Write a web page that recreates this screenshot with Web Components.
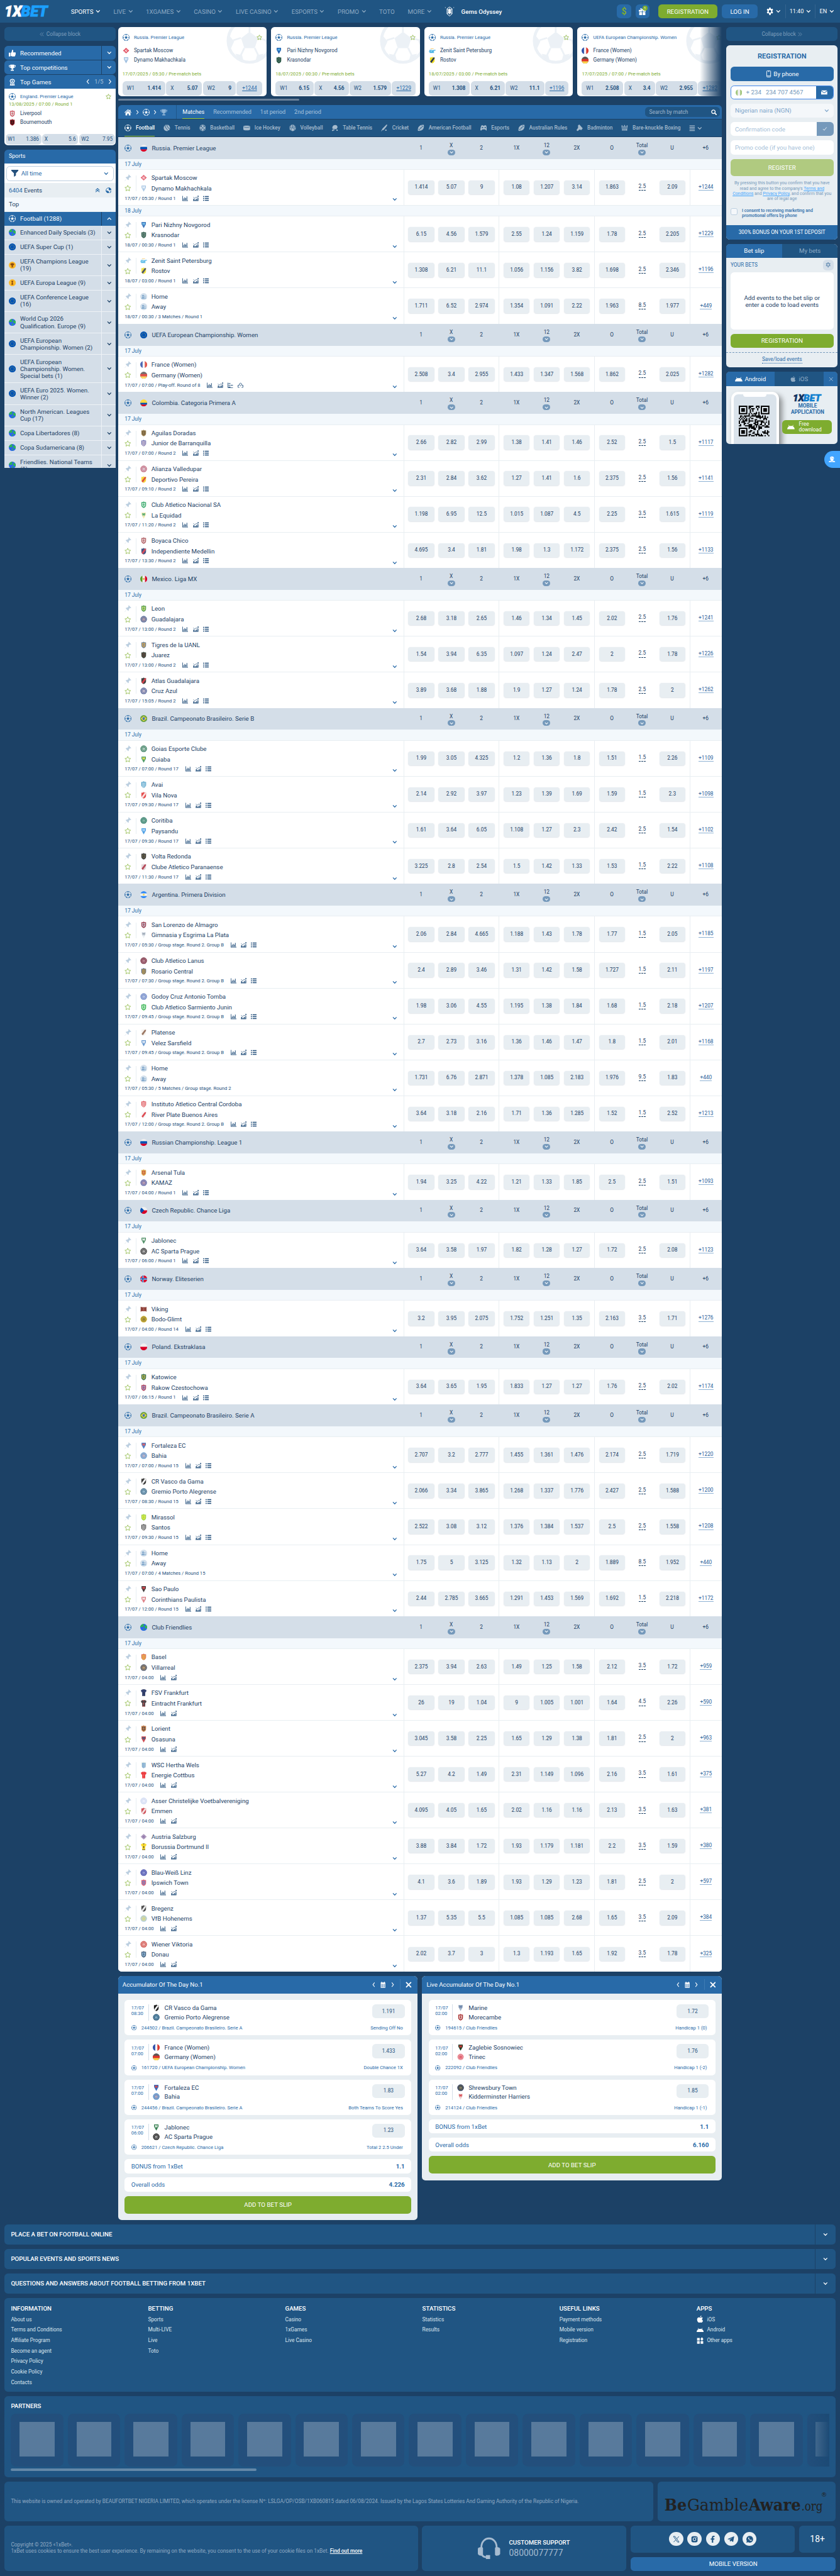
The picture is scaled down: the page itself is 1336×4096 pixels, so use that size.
<!DOCTYPE html>
<html lang="en">
<head>
<meta charset="utf-8">
<title>1xBet - Football</title>
<style>
html{margin:0;background:#1c4166;overflow:hidden}
body{margin:0;zoom:.69583;width:1920px;height:5880px;overflow:hidden;background:#1c4166;font-family:Roboto,"Liberation Sans",sans-serif;font-size:14px;line-height:16px;color:#1c4166}
</style>
</head>
<body>
<bet-page></bet-page>
<script>
const BASE = `*{box-sizing:border-box}svg{display:block;flex:none}.f{display:flex;align-items:center}.c{justify-content:center}.g1{flex:1}`;
const BALL = `<circle cx="8" cy="8" r="7.4" fill="none" stroke="currentColor" stroke-width="1"/><path fill="currentColor" d="M8 4.9l2.900 2.200-1.100 3.400H6.200L5.100 7.100zM5.800 1Q8 .2 10.200 1L8 2.700zM15.300 5.800Q15.800 8.500 14.600 11L13.300 8.200zM.7 5.800Q.2 8.500 1.400 11L2.700 8.200zM10 15.200l.6-2.300 2.300-.4Q12 14.400 10 15.200zM6 15.200l-.6-2.300-2.300-.4Q4 14.400 6 15.200z"/><path stroke="currentColor" stroke-width=".6" fill="none" d="M8 2.500v2.500M11 7l2.600.8M9.800 10.500l1.200 2.500M6.200 10.500L5 13M5 7l-2.600.8"/>`;
const ICONS = {
  ball: BALL,
  home: `<path fill="currentColor" d="M8 1L0 8.300l1.100 1.200L8 3.400l6.900 6.100L16 8.300l-2.300-2.100V2h-2v2.400zM2.300 9.700L8 4.700l5.700 5V15H9.700v-4H6.300v4h-4z"/>`,
  trophy: `<path fill="currentColor" d="M3.500 1h9v1.500H16c0 3.500-1.500 5.600-4.200 5.800C11 9.600 10 10.200 9 10.500v2h2.500V15h-7v-2.500H7v-2C6 10.200 5 9.600 4.200 8.300 1.500 8.100 0 6 0 2.500h3.500zM1.400 3.800c.2 1.600.9 2.700 2.300 3.100L3.400 3.800zm13.200 0h-2l-.3 3.100c1.400-.4 2.100-1.500 2.300-3.100z"/>`,
  thumb: `<path fill="currentColor" d="M0 7h3.500v8.500H0zM4.500 7.500C6.500 6 7 4 7.300 1c0-1 2.900-1.200 2.900 1.600 0 1.400-.4 2.400-.7 3.400h5c1.700 0 1.900 1.900.9 2.600.8.700.7 1.900-.3 2.400.6.800.3 1.900-.6 2.200.3 1-.3 2.300-1.800 2.300H8c-1.600 0-2-1-3.500-1z"/>`,
  medal: `<path fill="none" stroke="currentColor" stroke-width="1.800" d="M8 1.200l1.700.9 1.800.3.700 1.700.9 1.500-.9 1.700-.7 1.700-1.800.3L8 10.400l-1.700-1.100-1.800-.3-.7-1.700-.9-1.700.9-1.500.7-1.700 1.800-.3zM5 9.500L3.500 15l2-.6L7 15.500l1-3 1 3 1.500-1.100 2 .6L11 9.500"/><circle cx="8" cy="5.700" r="1.700" fill="currentColor"/>`,
  funnel: `<path fill="currentColor" d="M0 0h16v2l-5.500 6v5L6 16V8L0 2z"/>`,
  down: `<path fill="none" stroke="currentColor" stroke-width="2.600" d="M2 5l6 6 6-6"/>`,
  up: `<path fill="none" stroke="currentColor" stroke-width="2.600" d="M2 11l6-6 6 6"/>`,
  left: `<path fill="none" stroke="currentColor" stroke-width="2.400" d="M11 1L5 8l6 7"/>`,
  right: `<path fill="none" stroke="currentColor" stroke-width="2.400" d="M5 1l6 7-6 7"/>`,
  dleft: `<path fill="none" stroke="currentColor" stroke-width="1.600" d="M8 1.500L2 8l6 6.500M14.500 1.500L8.500 8l6 6.500"/>`,
  dright: `<path fill="none" stroke="currentColor" stroke-width="1.600" d="M8 1.500L14 8l-6 6.500M1.500 1.500L7.500 8l-6 6.500"/>`,
  dup: `<path fill="none" stroke="currentColor" stroke-width="2" d="M2 9l6-5.500L14 9M2 14l6-5.500L14 14"/>`,
  x: `<path stroke="currentColor" stroke-width="3" d="M1.500 1.500l13 13M14.500 1.500l-13 13"/>`,
  thinx: `<path stroke="currentColor" stroke-width="1.600" d="M2 2l12 12M14 2L2 14"/>`,
  star: `<path fill="none" stroke="currentColor" stroke-width="1.300" stroke-linejoin="round" d="M8 1.200l2.100 4.400 4.800.6-3.500 3.400.9 4.900L8 12.100l-4.300 2.400.9-4.900L1.100 6.200l4.800-.6z"/>`,
  pin: `<path fill="currentColor" d="M9.500.5l6 6-1.500.6-1.600-.3-2.600 2.700c.4 1.600 0 3-1 4L5.600 10.300 1 15.500l-.5-.5 5-4.700L2.500 7.200c1-1 2.400-1.400 4-1l2.700-2.600L8.900 2z"/>`,
  bars: `<path fill="currentColor" d="M0 1h1.500v12.500H16V15H0zM3 8h1.800v4.500H3zM6 5h1.800v7.500H6zM9 7h1.800v5.500H9zM12 2h1.800v10.500H12z"/>`,
  graph: `<path fill="currentColor" d="M1 9h2.500v5H1zM5 11h2.500v3H5zM9 9h2.500v5H9zM13 6h2.200v9H0v-1.500h13z"/><path stroke="currentColor" stroke-width="1.300" fill="none" d="M1 4l4 4 4-4 2 2 4-4.500"/><path fill="currentColor" d="M12 .5h4v4z"/>`,
  list: `<path fill="currentColor" d="M0 1.500h3v2.500H0zM5 1.500h11V4H5zM0 6.700h3v2.500H0zM5 6.700h11v2.500H5zM0 12h3v2.500H0zM5 12h11v2.500H5z"/>`,
  table: `<path fill="currentColor" d="M0 1h1.500v14H0zM2.500 2H8v2H2.500zM2.500 7H8v2H2.500zM2.500 12H8v2H2.500zM9 7h6v2H9zM1 14h14v1.500H1z"/>`,
  stadium: `<path fill="none" stroke="currentColor" stroke-width="1.500" d="M1 14V8h4V4l3-2 3 2v4h4v6h-4M1 14h4M8 8v3"/>`,
  lines: `<path fill="currentColor" d="M1 1h14v2H1zM1 5h14v2H1zM1 9h14v2H1zM1 13h14v2H1z"/>`,
  search: `<circle cx="6.500" cy="6.500" r="5" fill="none" stroke="currentColor" stroke-width="2.400"/><path stroke="currentColor" stroke-width="3" d="M10.500 10.500l5 5"/>`,
  gear: `<path fill="currentColor" fill-rule="evenodd" d="M6.500 0h3l.4 2.200 1.600.9 2.200-.8 1.500 2.600-1.700 1.500v1.800l1.700 1.500-1.500 2.600-2.200-.8-1.600.9L9.500 16h-3l-.4-3.600-1.600-.9-2.200.8L.8 9.700l1.700-1.500V6.400L.8 4.900l1.500-2.600 2.200.8 1.600-.9zM8 5a2.800 2.800 0 100 5.600A2.800 2.800 0 008 5z"/>`,
  gift: `<path fill="currentColor" d="M0 4h7.300v4H0zM8.700 4H16v4H8.700zM1 9h6.300v7H1zM8.700 9H15v7H8.700z"/><path fill="none" stroke="currentColor" stroke-width="1.500" d="M8 4C4 4 3 .8 5 .8S8 4 8 4s1-3.200 3-3.200S12 4 8 4z"/>`,
  gem: `<path fill="none" stroke="currentColor" stroke-width="1" d="M8 1l4 3v8l-4 3.500L4 12V4zM8 3.500L6 6v4l2 2.500L10 10V6zM4 4l2 2M12 4l-2 2M4 12l2-2M12 12l-2-2"/><path fill="currentColor" d="M8 4L6.300 6.200v3.600L8 12l1.700-2.200V6.200zM.8 1.500h1v1h-1zM14.200 1.500h1v1h-1z"/>`,
  globe: `<circle cx="8" cy="8" r="7" fill="none" stroke="currentColor" stroke-width="1.500"/><path fill="currentColor" d="M8 1c3 0 6 2 6.500 5l-3 2-3-1-.5-3zM1 8l5 1 3 2-1 4C4 15 1 12 1 8zM11 11l3-1-1.500 3z"/>`,
  phone: `<rect x="3.500" y="1" width="9" height="14" rx="1.200" fill="none" stroke="currentColor" stroke-width="1.300"/><path stroke="currentColor" stroke-width="1.300" d="M4 12.500h8M6.500 2.500h3"/>`,
  mail: `<path fill="currentColor" d="M0 1.500h16L8 9zM0 4l8 7 8-7v11H0z"/>`,
  check: `<path fill="none" stroke="currentColor" stroke-width="1.700" d="M2 8.500l4 4.500 8-10"/>`,
  android: `<path fill="currentColor" d="M0 13c.2-3 1.600-5.300 4-6.500L2.500 4l.7-.5 1.700 2.700A8.800 8.800 0 018 5.700c1.100 0 2.200.2 3.100.5l1.700-2.700.7.500L12 6.500c2.400 1.200 3.800 3.500 4 6.500z"/>`,
  apple: `<path fill="currentColor" d="M11 0c.1 1.900-1.500 3.700-3.200 3.600C7.600 1.900 9.300.2 11 0zM14 5.500c-2.600 1.600-2.200 5 .6 6.100-.7 2-2.200 4.400-3.700 4.400-1.200 0-1.500-.7-2.800-.7s-1.700.7-2.800.7C3.400 16 1 12.300 1 8.900c0-3.200 2-5 4-5 1.400 0 2.400.8 3.200.8.800 0 2-.9 3.500-.9 1 0 1.900.8 2.300 1.700z"/>`,
  apps: `<path fill="currentColor" d="M1 2h6v6H1zM1 9.500h6v6H1zM9 9.500h6v6H9zM12 .5l3.500 4L12 8.500l-3.500-4z"/>`,
  cal: `<path fill="currentColor" fill-rule="evenodd" d="M1 2h2V0h2v2h6V0h2v2h2v14H1zM2.500 6v2h2V6zm3.200 0v2h1.800V6zm3 0v2h1.800V6zm3 0v2h1.800V6zM2.500 9v2h2V9zm3.200 0v2h1.800V9zm3 0v2h1.800V9zm3 0v2h1.800V9zM2.500 12v2h2v-2zm3.200 0v2h1.800v-2zm3 0v2h1.800v-2zm3 0v2h1.800v-2z"/>`,
  agent: `<path fill="currentColor" d="M8 1c3 0 5 2 5 4.500 0 1.500-1 4-3 5.500l5 1.500 1 2.500H0l1-2.500L6 11C4 9.500 3 7 3 5.500 3 3 5 1 8 1z"/><path stroke="#42a5ff" stroke-width=".9" fill="none" d="M3.500 6C5 5.500 6 4.800 6.500 4c1 1.200 3 2 6 2M5 12l3 2.500 3-2.500"/>`,
  tennis: `<circle cx="8" cy="8" r="7.500" fill="currentColor"/><path fill="none" stroke="#205583" stroke-width="1.400" d="M4 1c0 5 1 7 8 14M8 0c0 4 2 7 7 11"/>`,
  basket: `<circle cx="8" cy="8" r="7.500" fill="currentColor"/><path fill="none" stroke="#205583" stroke-width="1.100" d="M2.700 2.700l10.600 10.600M13.300 2.700L2.700 13.300M1 6c3 0 5-2 5-5M15 10c-3 0-5 2-5 5M1 10c3 0 5 2 5 5M15 6c-3 0-5-2-5-5"/>`,
  puck: `<path fill="currentColor" d="M0 4.500C0 2 16 2 16 4.500v7c0 3-16 3-16 0z"/><path fill="none" stroke="#205583" d="M1 5.500c3 1.800 11 1.800 14 0"/>`,
  volley: `<circle cx="8" cy="8" r="7.500" fill="currentColor"/><path fill="none" stroke="#205583" stroke-width="1.100" d="M8 8V1M8 8c-4-2-6 0-7 2M8 8c4 1 5 3 4 6M4 2c0 3 0 4-3 5M5 15c-2-3 0-4 1-6M11 1c2 3 4 5 4 8M8 4c3 1 4 3 4.500 5"/>`,
  paddle: `<path fill="currentColor" d="M9 1c4 0 6 3 5.500 6L12 11l-9-1C1 6 4 1 9 1zM4 11l5 .7-1 1-5 2.800L1 14zM12 12h3v3h-3z"/>`,
  cricket: `<path fill="currentColor" d="M13 0l2 1-3 5-6 7-3 .5L1 16l-.8-.7L2 12.500 3 10l6-6zM10 12h3v3h-3z"/>`,
  football: `<path fill="currentColor" d="M15 1c1 6-1 10-5 12.500C6 16 1 15 1 15c-1-6 1-10 5-12.500C10 0 15 1 15 1z"/><path stroke="#205583" stroke-width="1.200" d="M4.500 11.500l7-7M6 8l2 2M8 6l2 2M2 10l4 4M10 2l4 4"/>`,
  pad: `<path fill="currentColor" fill-rule="evenodd" d="M3 2h3l1 1h2l1-1h3c1.500 1 3 8 3 11-.5 2-3 1.500-4.500-1.500h-7C3 14.500.5 15 0 13 0 10 1.500 3 3 2zm.5 4v2h3V6zm6.500 0v2h3V6z"/>`,
  shuttle: `<path fill="currentColor" d="M5 2l3-2 8 9-3 4-5-1-3 3c-2 1-4-1-3-3l3-4z"/>`,
  boxing: `<path fill="currentColor" d="M1 2h2v5H1zM4 4h2v3H4zM7 1h2v6H7zM10 4h2v3h-2zM13 2h2v5h-2zM1 8h14v1.500H1zM2 10.500h2v4H2zM5 10.500h2v4H5zM8 10.500h2v4H8zM11 10.500h3v4h-3z"/>`,
  headset: `<path fill="none" stroke="currentColor" stroke-width="1.300" d="M2.500 9V7.500C2.500 3.500 5 1 8 1s5.500 2.500 5.500 6.500V9M2.800 11.500c0 2 1.200 3 4 3"/><path fill="currentColor" d="M0 8.500C0 7.300 3.700 6.500 3.700 8v4.500C3.700 14 0 13.500 0 12zM16 8.500c0-1.200-3.700-2-3.700-.5v4.500c0 1.500 3.700 1 3.700-.5zM5.800 13h3v2.800h-3z"/>`,
  tx: `<path fill="none" stroke="currentColor" stroke-width="1.400" d="M1.500 1.500h3.500l9.500 13H11zM14 1.500L9.300 7M7 9.500l-5 5"/>`,
  insta: `<rect x="1" y="1" width="14" height="14" rx="4" fill="currentColor"/><circle cx="8" cy="8" r="3.200" fill="none" stroke="#e8eef2" stroke-width="1.500"/><circle cx="12" cy="4" r="1" fill="#e8eef2"/>`,
  fb: `<path fill="currentColor" d="M6 16V9H3.500V6.200H6V4c0-2.700 1.500-4 4-4l2.200.1v2.600h-1.600c-1.200 0-1.500.6-1.500 1.400v2.100H12L11.500 9H9.100v7z"/>`,
  tg: `<path fill="currentColor" d="M0 7.500L15.500 1 13 14.500 8 11l-2 3-.8-4.500L12 4 4 8.700z"/>`,
  wa: `<path fill="currentColor" fill-rule="evenodd" d="M0 16l1.200-4A7.700 7.700 0 118 15.700a8 8 0 01-3.800-1zM5 3.800c-1.500 1-1 3 .8 5s4.500 3.600 5.800 2.600c1-.8.800-1.500.6-1.700l-1.800-.9-1 1C8 9.500 6.500 8 6.200 7l.8-1-.8-2z"/>`
};
const FLAGS = {
  ru:`<path fill="#f0f0f0" d="M0 0h16v16H0z"/><path fill="#0052b4" d="M0 5h16v6H0z"/><path fill="#d80027" d="M0 10.800h16V16H0z"/>`,
  fr:`<path fill="#f4f4f8" d="M0 0h16v16H0z"/><path fill="#2e4fa8" d="M0 0h5.500v16H0z"/><path fill="#dd3b30" d="M10.500 0H16v16h-5.500z"/>`,
  de:`<path fill="#5b5555" d="M0 0h16v16H0z"/><path fill="#e0322a" d="M0 5.300h16V11H0z"/><path fill="#ffd24a" d="M0 10.700h16V16H0z"/>`,
  co:`<path fill="#ffda44" d="M0 0h16v16H0z"/><path fill="#0052b4" d="M0 8h16v4H0z"/><path fill="#d80027" d="M0 12h16v4H0z"/>`,
  mx:`<path fill="#f0f0f0" d="M0 0h16v16H0z"/><path fill="#5a9e20" d="M0 0h5v16H0z"/><path fill="#d80027" d="M11 0h5v16h-5z"/><path fill="#e8a93c" d="M6 6h4v3L8 10.500 6 9z"/>`,
  br:`<path fill="#6da544" d="M0 0h16v16H0z"/><path fill="#ffda44" d="M8 2.500L14.500 8 8 13.500 1.500 8z"/><circle cx="8" cy="8" r="2.800" fill="#0052b4"/><path stroke="#fff" stroke-width=".8" d="M5.500 7.500c2-.5 4 0 5 1.300" fill="none"/>`,
  ar:`<path fill="#f0f0f0" d="M0 0h16v16H0z"/><path fill="#338af3" d="M0 0h16v5H0zM0 11h16v5H0z"/><circle cx="8" cy="8" r="2" fill="#ffda44"/>`,
  cz:`<path fill="#f0f0f0" d="M0 0h16v16H0z"/><path fill="#d80027" d="M0 8h16v8H0z"/><path fill="#0052b4" d="M1 0l8 8-8 8H0V0z"/>`,
  no:`<path fill="#d80027" d="M0 0h16v16H0z"/><path fill="#f0f0f0" d="M4 0h4v16H4zM0 6h16v4H0z"/><path fill="#0052b4" d="M5 0h2v16H5zM0 7h16v2H0z"/>`,
  pl:`<path fill="#f0f0f0" d="M0 0h16v16H0z"/><path fill="#d80027" d="M0 8h16v8H0z"/>`,
  eu:`<path fill="#0052b4" d="M0 0h16v16H0z"/><circle cx="8" cy="8" r="4.500" fill="none" stroke="#ffda44" stroke-width="1.200" stroke-dasharray="1.200 2.330"/>`,
  world:`<path fill="#2a62f0" d="M0 0h16v16H0z"/><path fill="#2fb457" d="M1 3c3-3 6-3 8-2L7 5l2 1-2 2-2-1-3 1-2-1zM10 4l3-1 3 3v4l-3 1-3-3zM7 10l3 1-1 4-2-1z"/>`,
  cup:`<path fill="#fcb928" d="M0 0h16v16H0z"/><path fill="#8a4a10" d="M5 3.500h6V5h1.500c0 2-.5 3-2 3.300L9 10v1.500h1.500V13h-5v-1.500H7V10L5.500 8.300C4 8 3.500 7 3.500 5H5z"/>`,
  cup2:`<path fill="#fcb928" d="M0 0h16v16H0z"/><path fill="#8a4a10" d="M5.500 3.500h5L9 8l1.500 4.500h-5L7 8z"/>`,
  ng:`<path fill="#f0f0f0" d="M0 0h16v16H0z"/><path fill="#a3c77f" d="M0 0h5v16H0zM11 0h5v16h-5z"/>`
};
let uid = 0;
class El extends HTMLElement {
  connectedCallback() {
    if (this.shadowRoot) return;
    const r = this.attachShadow({mode: 'open'});
    const t = document.createElement('template');
    t.innerHTML = `<style>${BASE}${this.css ? this.css() : ''}</style>${this.html()}`;
    r.appendChild(t.content.cloneNode(true));
  }
  a(n, d = '') { return this.getAttribute(n) ?? d; }
}
const ic = (n, s = 16, c = '', h = '') => `<ui-icon name="${n}" size="${s}"${h ? ` h="${h}"` : ''}${c ? ` style="color:${c}"` : ''}></ui-icon>`;
const cr = (k, s = 16) => `<team-crest kind="${k}" size="${s}"></team-crest>`;

customElements.define('ui-icon', class extends El {
  css() { return ':host{display:block;flex:none}'; }
  html() { const s = this.a('size'); return `<svg width="${s}" height="${this.a('h', s)}" viewBox="0 0 16 16" preserveAspectRatio="${this.a('h') ? 'none' : 'xMidYMid'}">${ICONS[this.a('name')]}</svg>`; }
});
customElements.define('team-crest', class extends El {
  css() { return ':host{display:block;flex:none}'; }
  html() {
    const [k, cols = ''] = this.a('kind').split(':'), [a, b] = cols.split(',').map(x => '#' + x), s = this.a('size'), id = 'k' + uid++;
    let body;
    if (k === 'f') body = `<clipPath id="${id}"><circle cx="8" cy="8" r="8"/></clipPath><g clip-path="url(#${id})">${FLAGS[cols]}</g>`;
    else if (k === 'h') body = `<circle cx="8" cy="8" r="8" fill="#ccdbe9"/><circle cx="6.500" cy="6" r="2.200" fill="#6f9bc4"/><path fill="#6f9bc4" d="M3 13c0-6 7-6 7 0z"/><circle cx="10.800" cy="7.500" r="1.600" fill="#8fb2d2"/><path fill="#8fb2d2" d="M8.500 13c0-4.500 5-4.500 5 0z"/>`;
    else if (k === 't') body = `<path fill="${a}" d="M5 .5h6l3.500 2L13 7l-1.500-.5V15h-7V6.500L3 7 1.500 2.500z"/><path fill="${b}" d="M6 .5h4L8 3zM7 6h2v5H7zM4.500 13.500h7V15h-7z"/>`;
    else if (k === 'c') body = `<circle cx="8" cy="8" r="7.500" fill="${a}"/><circle cx="8" cy="8" r="5.200" fill="none" stroke="${b}" stroke-width=".9"/><path fill="${b}" d="M8 4.500l2.500 2v3.500L8 12l-2.500-2V6.500z"/><path stroke="${a}" d="M8 5v6.500"/>`;
    else if (k === 'd') body = `<path fill="${a}" d="M8 1.500L15 8l-7 6.500L1 8z"/><path stroke="${b}" stroke-width="1.300" fill="none" d="M4.500 9.500l5-4.500M6.500 11l5-4.500M5 6l5.500 5"/>`;
    else if (k === 'w') body = `<path fill="none" stroke="${a}" stroke-width="1.800" d="M1 11l1.500-4H6l-3 4h4l1.500-4v4l2-4v4l1.500-4h3.500M2 12.500h10"/><path stroke="${b}" stroke-width="1.300" d="M4 3.500h7"/>`;
    else if (k === 'v') body = `<path fill="${a}" d="M3 1.500h10v5L8 15.500 3 6.500z"/><path fill="${b}" d="M5 3h2.200v7L5 6.500zM8.800 3H11v3.500L8.800 10z"/><circle cx="8" cy="5.500" r="1.500" fill="${b}"/>`;
    else if (k === 'p') body = `<path fill="${a}" d="M1 2.500l3 1h9l1.500-1V14l-2-1H3l-2 1z"/><path fill="${b}" d="M7 5h2v6H7zM3 12h10v1H3z"/>`;
    else body = `<clipPath id="${id}"><path d="M8 .5l1.500 1.200L13.500 2v6.500c0 3.500-2.500 5.500-5.500 7-3-1.500-5.500-3.500-5.500-7V2l4-.3z"/></clipPath><g clip-path="url(#${id})"><path fill="${a}" d="M0 0h16v16H0z"/>${k === 'b' ? `<path fill="${b}" d="M4.500 3h1.500v12H4.500zM7.300 3h1.500v12H7.300zM10.200 3h1.500v12h-1.500z"/>` : k === 'x' ? `<path fill="${b}" d="M2 13L12 0l3 2L5 16z"/>` : `<path fill="${b}" d="M4.500 4h7v4.500c0 2-1.500 3.500-3.500 4.500-2-1-3.500-2.500-3.500-4.500z"/><path fill="${a}" d="M7 5h2v6H7zM5 7h6v1H5z"/>`}</g>`;
    return `<svg width="${s}" height="${s}" viewBox="0 0 16 16">${body}</svg>`;
  }
});
customElements.define('brand-logo', class extends El {
  css() { return ':host{display:block;flex:none}svg{overflow:visible}text{font-family:Roboto,sans-serif;font-weight:900;font-style:italic}'; }
  html() { return `<svg width="${this.a('w')}" height="${this.a('h')}" viewBox="0 0 102 25" preserveAspectRatio="none"><text x="0" y="24.300" font-size="33.500" textLength="40" lengthAdjust="spacingAndGlyphs" fill="${this.a('c1')}" stroke="${this.a('c1')}" stroke-width="1.200">1X</text><text x="38" y="24.300" font-size="33.500" textLength="61" lengthAdjust="spacingAndGlyphs" fill="${this.a('c2')}" stroke="${this.a('c2')}" stroke-width="1.200">BET</text></svg>`; }
});
customElements.define('top-bar', class extends El {
  css() { return `:host{display:flex;align-items:center;height:52px;background:#205583;color:#8eaac3;padding:0 14px 0 10px;font-size:14px}
  nav{display:flex;gap:30px;margin-left:50px}nav div{display:flex;align-items:center;gap:5px}nav .on{color:#fff}
  .gem{margin-left:30px;color:#fff;font-weight:500;gap:15px}
  .sq{width:32px;height:32px;border-radius:8px;background:#286aa8;color:#fff;position:relative}
  .dl{color:#7eac2f;font-size:20px;font-weight:700}
  .bd{position:absolute;right:4px;top:3px;width:12px;height:12px;border-radius:6px;background:#7eac2f;font-size:8px;line-height:12px;text-align:center}
  .r{gap:10px;color:#fff}.btn{height:32px;border-radius:8px;background:#286aa8}
  .s{border-left:1px solid #35648f;height:32px;gap:5px;font-size:13px}`; }
  html() {
    const nav = ['SPORTS', 'LIVE', '1XGAMES', 'CASINO', 'LIVE CASINO', 'ESPORTS', 'PROMO', 'TOTO', 'MORE'];
    return `<brand-logo w="102" h="25" c1="#fff" c2="#1ba0ff"></brand-logo><nav>${nav.map((n, i) => `<div class="${i ? '' : 'on'}"><span>${n}</span>${n === 'TOTO' ? '' : ic('down', 11)}</div>`).join('')}</nav>
    <div class="f gem">${ic('gem', 23)}<span>Gems Odyssey</span></div><div class="g1"></div>
    <div class="f r"><div class="f c sq"><span class="dl">$</span></div><div class="f c sq">${ic('gift', 16)}<span class="bd">1</span></div>
    <div class="f c btn" style="width:135px;margin-left:10px;background:#7eac2f">REGISTRATION</div><div class="f c btn" style="width:83px">LOG IN</div>
    <div class="f" style="gap:5px;margin:0 0 0 10px">${ic('gear', 16, '', 18)}${ic('down', 11)}</div><div class="f s" style="padding-left:9px">11:40 ${ic('down', 11)}</div><div class="f s" style="padding-left:9px">EN ${ic('down', 11)}</div></div>`;
  }
});
customElements.define('side-left', class extends El {
  css() { return `:host{display:block;width:255px;flex:none;margin-right:5px}
  .col{height:32px;border-radius:8px;background:#205583;color:#7f9fbd;font-size:12px;gap:5px}
  .bar{height:32px;background:#286aa8;color:#fff;border-radius:8px;margin-bottom:1px;padding-left:10px;gap:10px}
  .bar .ch{width:33px;height:32px;border-left:1px solid #1c4166}
  .game{background:#fff;height:129px;border-radius:0 0 8px 8px;padding:10px 10px 0;font-size:12px;overflow:hidden}
  .game .f{gap:10px}.od{gap:2.500px!important;margin:16px -7.500px 0}.od div{flex:1;height:24px;border-radius:8px;background:#d4dee8;color:#24527f;display:flex;justify-content:space-between;padding:4px 5px}
  .sp{background:#286aa8;color:#fff;height:32px;border-radius:8px 8px 0 0;padding-left:10px;margin-top:10px;font-size:13px}
  .sel{border:1.500px solid #bccfe0;border-radius:8px;height:35px;margin:0 5px;padding:0 10px;background:#fff;color:#286aa8;gap:6px}
  .list{height:554px;overflow:hidden;background:#d4dee8}
  .it{display:flex;border-bottom:1px solid #eef2f6;color:#1c4166}.it>.f:first-child{flex:1;padding-left:10px;gap:10px}.it span{width:168px;white-space:nowrap}.it .k{width:33px;border-left:1px solid #eef2f6}`; }
  html() {
    const items = [['world','Enhanced Daily Specials (3)'],['eu','UEFA Super Cup (1)'],['cup','UEFA Champions League<br>(19)'],['cup2','UEFA Europa League (9)'],['eu','UEFA Conference League<br>(16)'],['world','World Cup 2026<br>Qualification. Europe (9)'],['eu','UEFA European<br>Championship. Women (2)'],['eu','UEFA European<br>Championship. Women.<br>Special bets (1)'],['eu','UEFA Euro 2025. Women.<br>Winner (2)'],['world','North American. Leagues<br>Cup (17)'],['world','Copa Libertadores (8)'],['world','Copa Sudamericana (8)'],['world','Friendlies. National Teams<br>(1)']];
    const h = t => 33 + 16 * (t.split('<br>').length - 1);
    return `<div class="f c col">${ic('dleft', 10)}Collapse block</div>
    <div class="f bar" style="margin-top:11px">${ic('thumb')}<span class="g1">Recommended</span><div class="f c ch">${ic('down', 11)}</div></div>
    <div class="f bar">${ic('trophy')}<span class="g1">Top competitions</span><div class="f c ch">${ic('down', 11)}</div></div>
    <div class="f bar" style="margin:0;border-radius:8px 8px 0 0;padding-right:8px">${ic('medal')}<span class="g1">Top Games</span>${ic('left', 11)}<span style="color:#a9c3dc;font-size:13px">1/5</span>${ic('right', 11)}</div>
    <div class="game"><div class="f" style="color:#286aa8;font-size:11px">${ic('ball')}<span class="g1">England. Premier League</span>${ic('star', 13, '#7eac2f')}</div>
    <div style="color:#7eac2f;font-size:11px;line-height:20px">13/08/2025 / 07:00 / Round 1</div>
    <div class="f" style="height:20px">${cr('s:cf5a66,e8f5f2')}Liverpool</div><div class="f" style="height:21px">${cr('s:8e1720,201a1a')}Bournemouth</div>
    <div class="f od"><div><span>W1</span>1.386</div><div><span>X</span>5.6</div><div><span>W2</span>7.95</div></div></div>
    <div class="f sp">Sports</div><div style="background:#fff;height:45px;padding-top:5px"><div class="f sel">${ic('funnel', 16, '#24507c')}<span class="g1">All time</span>${ic('down', 11)}</div></div>
    <div class="f" style="height:32px;background:#e8eef2;padding:0 10px;gap:12px"><span class="g1"><span style="color:#286aa8">6404</span> Events</span>${ic('dup', 12, '#286aa8')}${ic('globe', 14, '#286aa8')}</div>
    <div class="f" style="height:33px;background:#f3f8fc;padding:0 10px;border-bottom:1px solid #e8eef2">Top</div>
    <div class="f" style="height:32px;background:#286aa8;color:#fff;padding-left:10px;gap:10px">${ic('ball')}<span class="g1">Football (1288)</span><div class="f c" style="width:33px;height:32px;border-left:1px solid #1c4166">${ic('up', 11)}</div></div>
    <div class="list">${items.map(([f, t]) => `<div class="it" style="height:${h(t)}px"><div class="f">${cr('f:' + f)}<span>${t}</span></div><div class="f c k">${ic('down', 11)}</div></div>`).join('')}</div>`;
  }
});
customElements.define('promo-card', class extends El {
  css() { return `:host{display:block;position:relative;width:340px;height:158px;flex:none;background:#fff;border-radius:8px;overflow:hidden;padding:15px 10px 0;font-size:12px}
  .wm{position:absolute;right:-14px;top:-22px;color:#ecf1f6}.l{gap:10px;position:relative}
  .od{gap:2px;margin-top:9px;position:relative}.od div{height:32px;border-radius:8px;background:#d4dee8;display:flex;align-items:center;justify-content:space-between;padding:0 10px;color:#24527f}b{font-weight:700}u{margin:auto;color:#286aa8;text-underline-offset:2px}`; }
  html() {
    const [lg, a, ka, b, kb, dt, o1, ox, o2, n, ws] = this.a('data').split('|'), w = ws.split(',');
    return `<div class="wm">${ic('ball', 106)}</div><div class="f l" style="color:#286aa8;font-size:11px">${ic('ball')}<span class="g1">${lg}</span>${ic('star', 13, '#7eac2f')}</div>
    <div class="f l" style="margin-top:15px">${cr(ka)}${a}</div><div class="f l" style="margin-top:5px">${cr(kb)}${b}</div>
    <div style="color:#7eac2f;font-size:11px;margin-top:16px;position:relative">${dt} / Pre-match bets</div>
    <div class="f od"><div style="width:${w[0]}px"><span>W1</span><b>${o1}</b></div><div style="width:${w[1]}px"><span>X</span><b>${ox}</b></div><div style="width:${w[2]}px"><span>W2</span><b>${o2}</b></div><div style="width:${w[3]}px;padding:0"><u>${n}</u></div></div>`;
  }
});
customElements.define('sports-tabs', class extends El {
  css() { return `:host{display:block;color:#8fb4d6}
  .a{height:32px;background:#286aa8;border-radius:8px 8px 0 0;padding:0 5px 0 15px;gap:10px;font-size:13px}
  .t{height:32px;padding-top:8px;margin-right:10px;color:#a9c3dc;border-bottom:2px solid transparent}.on{color:#fff!important;border-bottom-color:#9ac92e!important}
  .s{width:171px;height:24px;border-radius:8px;background:#205583;padding:0 6px 0 10px;font-size:12px;color:#a0b8ce}
  .b{height:41px;border-top:1px solid #1c4166;border-bottom:1px solid #1c4166;background:#205583;padding:0 15px;gap:20px;font-size:12px;font-weight:500;color:#a6bbcd}.b .i{gap:10px;height:39px;padding-top:2px;border-bottom:2px solid transparent;white-space:nowrap}`; }
  html() {
    const sp = [['ball','Football'],['tennis','Tennis'],['basket','Basketball'],['puck','Ice Hockey'],['volley','Volleyball'],['paddle','Table Tennis'],['cricket','Cricket'],['football','American Football'],['pad','Esports'],['football','Australian Rules'],['shuttle','Badminton'],['boxing','Bare-knuckle Boxing']];
    return `<div class="f a"><div class="f" style="color:#fff;gap:7.500px;padding-right:19px;height:32px;border-right:1px solid #1f568a;margin-right:4px">${ic('home')}${ic('right', 10)}${ic('ball')}${ic('right', 10)}${ic('trophy', 16, '#8fb4d6')}</div>
    <span class="t on">Matches</span><span class="t">Recommended</span><span class="t">1st period</span><span class="t">2nd period</span><div class="g1"></div><div class="f s"><span class="g1">Search by match</span>${ic('search', 13, '#fff')}</div></div>
    <div class="f b">${sp.map(([i, t], n) => `<div class="f i ${n ? '' : 'on'}">${ic(i, 15.5)}${t}</div>`).join('')}<div class="f i" style="gap:4px">${ic('lines', 14)}${ic('down', 11)}</div></div>`;
  }
});
customElements.define('league-head', class extends El {
  css() { return `:host{display:flex;align-items:center;height:50px;background:#d4dee8;padding-left:15px;font-size:12px}
  .n{gap:0;width:637px;font-size:14px}.n team-crest{margin:0 10px 0 20px}
  .gr{display:grid;grid-template-columns:repeat(3,59px);gap:10px;padding:0 10px 0 11px;width:218px;height:50px;text-align:center}.gr>div,.p{display:flex;flex-direction:column;align-items:center;justify-content:center}
  .w{padding-top:3px}.bg{width:17px;height:13px;border-radius:6.500px;background:#7599bb;display:flex;align-items:center;justify-content:center;color:#fff;margin-top:1px}.p{width:74px}`; }
  html() {
    const g = [['1','*X','2'],['1X','*12','2X'],['O','*Total','U']];
    return `<div class="f n">${ic('ball', 16, '#286aa8')}${cr('f:' + this.a('flag'))}${this.a('name')}</div>` + g.map(x => `<div class="gr">${x.map(t => t[0] === '*' ? `<div class="w">${t.slice(1)}<span class="bg">${ic('down', 9)}</span></div>` : `<div>${t}</div>`).join('')}</div>`).join('') + `<div class="p">+6</div>`;
  }
});
customElements.define('match-row', class extends El {
  css() { return `:host{display:flex;height:82px;background:#fff;border-bottom:1px solid #e8eef2;font-size:12px}:host([last]){height:81px;border:0}
  .l{width:652px;padding:10px 0 0 15px;position:relative}.t{height:17px;font-size:14px}.t+.t{margin-top:7px}.t ui-icon{margin-right:9px}.t team-crest{margin:0 10px 0 10px;opacity:.85}
  .v{position:absolute;left:40px;top:13px;width:1px;height:36px;background:#e8eef2}
  .m{height:14px;margin-top:7px;font-size:11px;gap:10.500px;color:#24507c}.m span{margin-right:5px}.ch{position:absolute;right:14px;bottom:7px;color:#286aa8}
  .gr{display:grid;grid-template-columns:repeat(3,59px);gap:0 10px;border-left:1px solid #e8eef2;padding:0 10px;width:218px;align-items:center;justify-items:stretch}
  .o{height:32px;border-radius:6px;background:#e8eef2;display:flex;align-items:center;justify-content:center;box-shadow:0 1px 2px rgba(28,65,102,.13)}
  .tt{justify-self:center;border-bottom:1px dashed #1c4166;margin-top:-2px}
  .n{width:74px;border-left:1px solid #e8eef2;color:#2a6099}.n span{border-bottom:2px solid #8fb2d4;line-height:13px}`; }
  html() {
    const [a, ka, b, kb, m, o, n, i] = this.a('data').split('|'), v = o.split(' ');
    const gr = (x, y, z, tot) => `<div class="gr"><div class="o">${x}</div>${tot ? `<span class="tt">${y}</span>` : `<div class="o">${y}</div>`}<div class="o">${z}</div></div>`;
    const set = {3: ['bars','graph','list'], 2: ['bars','graph'], 4: ['bars','graph','table','stadium'], 0: []}[i];
    return `<div class="l"><i class="v"></i><div class="f t">${ic('pin', 16, '#bccfe0')}${cr(ka)}${a}</div><div class="f t">${ic('star', 15, '#8fba48')}<i style="width:1px"></i>${cr(kb)}${b}</div><div class="f m"><span>${m}</span>${set.map(x => ic(x, 13)).join('')}</div><div class="ch">${ic('down', 11)}</div></div>
    ${gr(v[0], v[1], v[2])}${gr(v[3], v[4], v[5])}${gr(v[6], v[7], v[8], 1)}<div class="f c n"><span>+${n}</span></div>`;
  }
});
const LEAGUES = [
['ru','Russia. Premier League',[['17 July',
'Spartak Moscow|d:e0485a,fff|Dynamo Makhachkala|v:9dbfe0,e6f0fa|17/07 / 05:30 / Round 1|1.414 5.07 9 1.08 1.207 3.14 1.863 2.5 2.09|1244|3'],['18 July',
'Pari Nizhny Novgorod|v:1f5fae,5fb7e8|Krasnodar|s:1d4d3c,5c7f72|18/07 / 00:30 / Round 1|6.15 4.56 1.579 2.55 1.24 1.159 1.78 2.5 2.205|1229|3',
'Zenit Saint Petersburg|w:4bb4e6,f3c766|Rostov|x:f0de28,2d3a50|18/07 / 03:00 / Round 1|1.308 6.21 11.1 1.056 1.156 3.82 1.698 2.5 2.346|1196|3',
'Home|h|Away|h|18/07 / 00:30 / 3 Matches / Round 1|1.711 6.52 2.974 1.354 1.091 2.22 1.963 8.5 1.977|449|0']]],
['eu','UEFA European Championship. Women',[['17 July',
'France (Women)|f:fr|Germany (Women)|f:de|17/07 / 07:00 / Play-off. Round of 8|2.508 3.4 2.955 1.433 1.347 1.568 1.862 2.5 2.025|1282|4']]],
['co','Colombia. Categoria Primera A',[['17 July',
'Aguilas Doradas|s:8a6d35,5a4320|Junior de Barranquilla|b:4a4fa0,f0d8dc|17/07 / 07:00 / Round 2|2.66 2.82 2.99 1.38 1.41 1.46 2.52 2.5 1.5|1117|3',
'Alianza Valledupar|c:b9536a,e8ecf5|Deportivo Pereira|x:f6cf1c,d8321f|17/07 / 09:10 / Round 2|2.31 2.84 3.62 1.27 1.41 1.6 2.375 2.5 1.56|1141|3',
'Club Atletico Nacional SA|s:1f9e5a,d8f0e0|La Equidad|v:f1e6a8,2f9a5a|17/07 / 11:20 / Round 2|1.198 6.95 12.5 1.015 1.087 4.5 2.25 3.5 1.615|1119|3',
'Boyaca Chico|s:a84a50,e8d4d4|Independiente Medellin|x:26386e,d03040|17/07 / 13:30 / Round 2|4.695 3.4 1.81 1.98 1.3 1.172 2.375 2.5 1.56|1133|3']]],
['mx','Mexico. Liga MX',[['17 July',
'Leon|s:3d8f35,cfe06a|Guadalajara|c:37578f,e0a8a0|17/07 / 13:00 / Round 2|2.68 3.18 2.65 1.46 1.34 1.45 2.02 2.5 1.76|1241|3',
'Tigres de la UANL|s:5d7080,e0a030|Juarez|s:1e2a1c,4c2a20|17/07 / 13:00 / Round 2|1.54 3.94 6.35 1.097 1.24 2.47 2 2.5 1.78|1226|3',
'Atlas Guadalajara|x:202020,d0202c|Cruz Azul|c:3a4f8c,f0d8dc|17/07 / 15:05 / Round 2|3.89 3.68 1.88 1.9 1.27 1.24 1.78 2.5 2|1262|3']]],
['br','Brazil. Campeonato Brasileiro. Serie B',[['17 July',
'Goias Esporte Clube|c:1f6a4a,dfeee6|Cuiaba|v:2e8a4c,e6dc3c|17/07 / 07:00 / Round 17|1.99 3.05 4.325 1.2 1.36 1.8 1.51 1.5 2.26|1109|3',
'Avai|b:1d84b8,e8f4fa|Vila Nova|x:e03030,f8dcdc|17/07 / 09:30 / Round 17|2.14 2.92 3.97 1.23 1.39 1.69 1.59 1.5 2.3|1098|3',
'Coritiba|c:1d6f5a,8fc0b0|Paysandu|v:2f8fe0,a8d4f8|17/07 / 09:30 / Round 17|1.61 3.64 6.05 1.108 1.27 2.3 2.42 2.5 1.54|1102|3',
'Volta Redonda|s:1a1a1a,5a5030|Clube Atletico Paranaense|x:e0d0d4,a8283a|17/07 / 11:30 / Round 17|3.225 2.8 2.54 1.5 1.42 1.33 1.53 1.5 2.22|1108|3']]],
['ar','Argentina. Primera Division',[['17 July',
'San Lorenzo de Almagro|s:8f2438,c0c8d8|Gimnasia y Esgrima La Plata|v:e6ebf0,8a98a8|17/07 / 05:30 / Group stage. Round 2. Group B|2.06 2.84 4.665 1.188 1.43 1.78 1.77 1.5 2.05|1185|3',
'Club Atletico Lanus|c:6a1c30,c890a0|Rosario Central|b:2a3c60,e8b030|17/07 / 07:30 / Group stage. Round 2. Group B|2.4 2.89 3.46 1.31 1.42 1.58 1.727 1.5 2.11|1197|3',
'Godoy Cruz Antonio Tomba|c:5a78c0,c8d4ec|Club Atletico Sarmiento Junin|s:18a838,d8f4dc|17/07 / 09:45 / Group stage. Round 2. Group B|1.98 3.06 4.55 1.195 1.38 1.84 1.68 1.5 2.18|1207|3',
'Platense|x:f4f0ec,8a6048|Velez Sarsfield|v:4f88c8,e8f0fa|17/07 / 09:45 / Group stage. Round 2. Group B|2.7 2.73 3.16 1.36 1.46 1.47 1.8 1.5 2.01|1168|3',
'Home|h|Away|h|17/07 / 05:30 / 5 Matches / Group stage. Round 2|1.731 6.76 2.871 1.378 1.085 2.183 1.976 9.5 1.83|440|0',
'Instituto Atletico Central Cordoba|b:d82c34,f8e0e0|River Plate Buenos Aires|x:f4f4f6,d82c34|17/07 / 12:00 / Group stage. Round 2. Group B|3.64 3.18 2.16 1.71 1.36 1.285 1.52 1.5 2.52|1213|3']]],
['ru','Russian Championship. League 1',[['17 July',
'Arsenal Tula|s:d8a030,c03828|KAMAZ|c:4a5ca8,e0a0a0|17/07 / 04:00 / Round 1|1.94 3.25 4.22 1.21 1.33 1.85 2.5 2.5 1.51|1093|3']]],
['cz','Czech Republic. Chance Liga',[['17 July',
'Jablonec|v:2f7a4a,e8f2ea|AC Sparta Prague|c:181818,e0e0e0|17/07 / 06:00 / Round 1|3.64 3.58 1.97 1.82 1.28 1.27 1.72 2.5 2.08|1123|3']]],
['no','Norway. Eliteserien',[['17 July',
'Viking|p:7c241c,a85040|Bodo-Glimt|c:c8a818,5c4c10|17/07 / 04:00 / Round 14|3.2 3.95 2.075 1.752 1.251 1.35 2.163 3.5 1.71|1276|3']]],
['pl','Poland. Ekstraklasa',[['17 July',
'Katowice|s:1c5c34,c8b430|Rakow Czestochowa|s:a82848,8898d0|17/07 / 06:15 / Round 1|3.64 3.65 1.95 1.833 1.27 1.27 1.76 2.5 2.02|1174|3']]],
['br','Brazil. Campeonato Brasileiro. Serie A',[['17 July',
'Fortaleza EC|v:2f6cc0,e04848|Bahia|c:4a90d0,e8b0b0|17/07 / 07:00 / Round 15|2.707 3.2 2.777 1.455 1.361 1.476 2.174 2.5 1.719|1220|3',
'CR Vasco da Gama|x:1c1c1c,f4f4f4|Gremio Porto Alegrense|c:2a5878,a8d0e8|17/07 / 08:30 / Round 15|2.066 3.34 3.865 1.268 1.337 1.776 2.427 2.5 1.588|1200|3',
'Mirassol|s:8fd028,e8e828|Santos|b:202020,e8e8e8|17/07 / 09:30 / Round 15|2.522 3.08 3.12 1.376 1.384 1.537 2.5 2.5 1.558|1208|3',
'Home|h|Away|h|17/07 / 07:00 / 4 Matches / Round 15|1.75 5 3.125 1.32 1.13 2 1.889 8.5 1.952|440|0',
'Sao Paulo|v:201c1c,d82c34|Corinthians Paulista|v:d86870,f4e8e8|17/07 / 12:00 / Round 15|2.44 2.785 3.665 1.291 1.453 1.569 1.692 1.5 2.218|1172|3']]],
['world','Club Friendlies',[['17 July',
'Basel|b:d84830,e8c838|Villarreal|c:2c3c58,e8a850|17/07 / 04:00|2.375 3.94 2.63 1.49 1.25 1.58 2.12 3.5 1.72|959|2',
'FSV Frankfurt|t:12225a,0c1838|Eintracht Frankfurt|t:302428,c04040|17/07 / 04:00|26 19 1.04 9 1.005 1.001 1.64 4.5 2.26|590|2',
'Lorient|s:c06828,383030|Osasuna|v:c83038,24406c|17/07 / 04:00|3.045 3.58 2.25 1.65 1.29 1.38 1.81 2.5 2|963|2',
'WSC Hertha Wels|b:d8e8e0,3878c0|Energie Cottbus|t:e81c20,f45050|17/07 / 04:00|5.27 4.2 1.49 2.31 1.149 1.096 2.16 3.5 1.61|375|2',
'Asser Christelijke Voetbalvereniging|c:c8d4f0,f8f8ff|Emmen|x:c83840,f0dcdc|17/07 / 04:00|4.095 4.05 1.65 2.02 1.16 1.16 2.13 3.5 1.63|381|2',
'Austria Salzburg|d:a890b8,6c5090|Borussia Dortmund II|t:fcd80c,383010|17/07 / 04:00|3.88 3.84 1.72 1.93 1.179 1.181 2.2 3.5 1.59|380|2',
'Blau-Weiß Linz|c:3038a0,a0a8e0|Ipswich Town|s:d84860,5078c8|17/07 / 04:00|4.1 3.6 1.89 1.93 1.29 1.23 1.81 2.5 2|597|2',
'Bregenz|x:303030,e8e8e8|VfB Hohenems|c:a8c8e0,e8d840|17/07 / 04:00|1.37 5.35 5.5 1.085 1.085 2.68 1.65 3.5 2.09|384|2',
'Wiener Viktoria|c:c83830,f8d0d0|Donau|s:284868,88b8e0|17/07 / 04:00|2.02 3.7 3 1.3 1.193 1.65 1.92 3.5 1.78|325|2']]]];
customElements.define('match-list', class extends El {
  css() { return `:host{display:block;background:#fff;border-radius:0 0 8px 8px;overflow:hidden}.d{height:25px;background:#f3f8fc;border-bottom:1px solid #e8eef2;font-size:12px;line-height:24px;padding-left:15px;color:#286aa8}`; }
  html() {
    return LEAGUES.map(([f, n, days]) => `<league-head flag="${f}" name="${n}"></league-head>` + days.map(([d, ...rows], di) => `<div class="d">${d}</div>` + rows.map((r, i) => `<match-row data="${r}"${di === days.length - 1 && i === rows.length - 1 ? ' last' : ''}></match-row>`).join('')).join('')).join('');
  }
});
customElements.define('acca-card', class extends El {
  css() { return `:host{display:block;width:685px;background:#e8eef2;border-radius:8px;overflow:hidden;color:#286aa8}
  .h{height:40px;background:#286aa8;color:#fff;padding:0 14px 0 10px;gap:10px}.b{padding:15px;display:flex;flex-direction:column;gap:10px}
  .m{background:#fff;border-radius:8px;height:81px;padding:10px 15px 0;font-size:11px}.m .top{display:flex;height:37px}
  .tm{width:40px;border-right:1px solid #d4dee8;line-height:13px;padding-top:2px}.n{padding-left:10px;color:#1c4166;font-size:14px;flex:1}.n .f{gap:10px;height:16px;margin-bottom:5px}
  .o{width:74px;height:32px;border-radius:8px;background:#e8eef2;color:#24507c;font-size:12px}
  .s{background:#fff;border-radius:8px;height:32px;padding:0 15px;justify-content:space-between}.add{height:40px;border-radius:8px;background:#7eac2f;color:#fff}`; }
  html() {
    return `<div class="f h"><span class="g1">${this.a('heading')}</span>${ic('left', 10, '', 11)}${ic('cal', 12, '', 14)}${ic('right', 10, '', 11)}<i style="width:1px;height:24px;background:#3f7bb3;margin:0 2px"></i>${ic('x', 14)}</div>
    <div class="b">${this.a('rows').split(';').map(r => { const [t, a, ka, b, kb, o, id, bet] = r.split('|'); return `<div class="m"><div class="top"><div class="tm">17/07<br>${t}</div><div class="n"><div class="f">${cr(ka)}${a}</div><div class="f">${cr(kb)}${b}</div></div><div class="f c o">${o}</div></div><div class="f" style="gap:11px;margin-top:9px;padding-right:4px">${ic('ball', 12)}<span class="g1">${id}</span><span>${bet}</span></div></div>`; }).join('')}
    <div class="f s"><span>BONUS from 1xBet</span><b>1.1</b></div><div class="f s"><span>Overall odds</span><b>${this.a('total')}</b></div><div class="f c add">ADD TO BET SLIP</div></div>`;
  }
});
customElements.define('side-right', class extends El {
  css() { return `:host{display:block;width:255px;flex:none;margin-left:10px}
  .col{height:32px;border-radius:8px;background:#205583;color:#7f9fbd;font-size:12px;gap:5px}
  .p{background:#e8eef2;border-radius:8px;overflow:hidden;margin-top:10px}.pad{padding:0 10px}
  .in{height:32px;border-radius:8px;background:#fff;margin-bottom:10px;padding-left:10px;color:#a5c0d8;overflow:hidden}.sq{width:38px;height:32px;background:#286aa8;color:#fff}
  .btn{height:32px;border-radius:8px;color:#fff;background:#286aa8}
  .sm{font-size:10px;line-height:12px;text-align:center;color:#7599bb;margin-top:10px;white-space:nowrap}.sm u{color:#42a5ff;text-decoration:underline}
  .tabs{height:32px;background:#205583;color:#8eaac3}.tabs>div{height:32px;gap:5px}.tabs .on{background:#286aa8;color:#fff}`; }
  qr() {
    let s = 7, d = '';
    const fin = (x, y) => { for (const [ox, oy] of [[0,0],[18,0],[0,18]]) { const u = x - ox, v = y - oy; if (u >= -1 && u <= 7 && v >= -1 && v <= 7) { if (u < 0 || v < 0 || u > 6 || v > 6) return 0; return (u === 0 || v === 0 || u === 6 || v === 6 || (u > 1 && u < 5 && v > 1 && v < 5)) ? 1 : 0; } } return -1; };
    for (let y = 0; y < 25; y++) for (let x = 0; x < 25; x++) { s = (s * 1103515245 + 12345) % 2147483648; let f = fin(x, y); if (f < 0) f = (s >> 16) & 1; if (f) d += `M${x} ${y}h1v1h-1z`; }
    return `<svg width="70" height="70" viewBox="0 0 25 25"><path d="${d}"/></svg>`;
  }
  html() {
    return `<div class="f c col">Collapse block ${ic('dright', 10)}</div>
    <div class="p" style="height:443px"><div class="pad" style="height:411px"><div style="text-align:center;font-weight:700;font-size:16px;color:#286aa8;padding-top:17px;height:49px">REGISTRATION</div>
    <div class="f c btn" style="gap:3px;margin-bottom:10px">${ic('phone', 16)}By phone</div>
    <div class="f in" style="border:1px solid #4287e8;color:#7599bb">${cr('f:ng', 15)}<span style="margin-left:9px">+ 234</span><span class="g1" style="margin-left:10px">234 707 4567</span><div class="f c sq">${ic('mail', 14, '', 11)}</div></div>
    <div class="f in" style="background:#f4f7fa;color:#7fa6cb;padding-right:10px"><span class="g1">Nigerian naira (NGN)</span>${ic('down', 11)}</div>
    <div class="f in"><span class="g1">Confirmation code</span><div class="f c sq" style="background:#7599bb">${ic('check', 11)}</div></div><div class="f in">Promo code (if you have one)</div>
    <div class="f c btn" style="height:40px;background:#b0ca80">REGISTER</div>
    <div class="sm">By pressing this button you confirm that you have<br>read and agree to the company's <u>Terms and<br>Conditions</u> and <u>Privacy Policy</u>, and confirm that you<br>are of legal age</div>
    <div class="f" style="margin-top:15px;gap:10px;font-size:10px;line-height:12px;font-weight:500;color:#286aa8;align-items:flex-start"><i style="width:16px;height:16px;border:1px solid #bccfe0;border-radius:4px;background:#f4f7fa"></i><span>I consent to receiving marketing and<br>promotional offers by phone</span></div></div>
    <div class="f c" style="height:32px;background:#286aa8;color:#fff;font-size:12px">300% BONUS ON YOUR 1ST DEPOSIT</div></div>
    <div class="p" style="height:283px"><div class="f tabs"><div class="f c on g1">Bet slip</div><div class="f c g1">My bets</div></div>
    <div class="pad"><div class="f" style="height:34px;font-size:12px;color:#286aa8"><span class="g1">YOUR BETS</span><div class="f c" style="width:24px;height:24px;border-radius:8px;background:#d4dee8">${ic('gear', 12, '#7599bb')}</div></div>
    <div class="f c" style="height:130px;background:#fff;border-radius:8px;text-align:center">Add events to the bet slip or<br>enter a code to load events</div><div class="f c btn" style="background:#7eac2f;margin-top:10px">REGISTRATION</div></div>
    <div class="f c" style="margin-top:10px;height:34px;border-top:1px dashed #7599bb;font-size:12px;color:#286aa8"><span style="border-bottom:1px dotted #286aa8">Save/load events</span></div></div>
    <div class="p" style="height:165px"><div class="f tabs"><div class="f c on" style="width:111px">${ic('android', 17)}Android</div><div class="f c" style="width:112px;gap:6px">${ic('apple', 13)}iOS</div><div class="f c g1" style="background:#286aa8;color:#bcd0e4">${ic('thinx', 11)}</div></div>
    <div style="display:flex;height:133px;padding:14px 11px 0"><div style="width:109px;height:220px;border:7px solid #fff;border-radius:16px;background:#dae3eb;box-shadow:6px 8px 12px rgba(0,0,0,.4);flex:none"><div style="width:54px;height:5px;margin:0 auto;background:#fff;border-radius:0 0 6px 6px"></div><div style="padding:21px 12.500px">${this.qr()}</div></div>
    <div style="margin-left:8px;width:116px;flex:none"><div style="padding:6px 0 4px 24px"><brand-logo w="66" h="15" c1="#0e3160" c2="#0f7fd0"></brand-logo></div><div style="font-weight:700;font-size:12px;line-height:14px;text-align:center;color:#286aa8">MOBILE<br>APPLICATION</div><div class="f btn" style="background:#7eac2f;margin-top:11px;width:113px;padding-left:11px;gap:10px;font-size:12px;line-height:13px">${ic('android', 17)}<span>Free<br>download</span></div></div></div></div>
    <div style="display:flex;justify-content:flex-end;margin:15px -5px 0 0"><div class="f c" style="width:36px;height:40px;border-radius:20px 0 0 20px;background:#42a5ff;color:#fff">${ic('agent', 15)}</div></div>`;
  }
});
customElements.define('foot-bar', class extends El {
  css() { return `:host{display:flex;height:46px;align-items:center;border-radius:8px;background:#205583;color:#fff;font-weight:500;padding-left:15px;margin-bottom:10px}.k{width:48px;height:46px;border-left:1px solid #1c4166}`; }
  html() { return `<span class="g1"><slot></slot></span><div class="f c k">${ic('down', 11)}</div>`; }
});
customElements.define('page-foot', class extends El {
  css() { return `:host{display:block;padding:10px 10px 0;color:#fff}.p{background:#205583;border-radius:8px}
  .info{height:214px;display:flex;padding:16px 0 0 15px;margin-bottom:10px}.info>div{width:313.400px;flex:none;font-size:12px;line-height:24px;color:#dbe6ef}.info>div:last-child{width:300px}.info b,.pt b{display:block;font-weight:500;font-size:14px;line-height:16px;margin-bottom:5px;color:#fff}
  .info .f{gap:8px;height:24px}.pt{height:186px;padding:15px 15px 0;margin-bottom:10px}
  .tl{display:flex;gap:10px;margin-top:10px;overflow:hidden;position:relative;border-radius:8px 0 0 8px}.tl div{width:120px;height:120px;flex:none;border-radius:12px;background:#234f7c;padding:18px 20px}.tl i{display:block;height:80px;background:#587a9c}
  .tl div:last-child{width:50px;padding-right:0;border-radius:12px 0 0 12px}
  .tl::after{content:"";position:absolute;right:0;top:0;width:52px;height:120px;background:linear-gradient(90deg,rgba(28,65,102,0),#1c4a75)}
  .row{display:flex;gap:10px}.mut{color:#91abc3;font-size:12px}.ci{width:32px;height:32px;border-radius:16px;background:#e8eef2;color:#205583}
  .bg{font-family:"DejaVu Serif","Liberation Serif",serif;fill:#222}`; }
  html() {
    const cols = [['INFORMATION','About us','Terms and Conditions','Affiliate Program','Become an agent','Privacy Policy','Cookie Policy','Contacts'],['BETTING','Sports','Multi-LIVE','Live','Toto'],['GAMES','Casino','1xGames','Live Casino'],['STATISTICS','Statistics','Results'],['USEFUL LINKS','Payment methods','Mobile version','Registration'],['APPS','apple:iOS','android:Android','apps:Other apps']];
    return `<foot-bar>PLACE A BET ON FOOTBALL ONLINE</foot-bar><foot-bar>POPULAR EVENTS AND SPORTS NEWS</foot-bar><foot-bar>QUESTIONS AND ANSWERS ABOUT FOOTBALL BETTING FROM 1XBET</foot-bar>
    <div class="p info">${cols.map(([h, ...l]) => `<div><b>${h}</b>${l.map(x => x.includes(':') ? `<div class="f">${ic(x.split(':')[0], 16, '#fff')}${x.split(':')[1]}</div>` : `<div>${x}</div>`).join('')}</div>`).join('')}</div>
    <div class="p pt"><b>PARTNERS</b><div class="tl">${'<div><i></i></div>'.repeat(15)}</div><div style="width:561px;height:5px;border-radius:3px;background:#6488a8;margin-top:5px"></div></div>
    <div class="row" style="height:90px;margin-bottom:10px"><div class="p f mut" style="width:1483px;padding-left:15px">This website is owned and operated by BEAUFORTBET NIGERIA LIMITED, which operates under the license Nº: LSLGA/OP/OSB/1XB060815 dated 06/08/2024. Issued by the Lagos States Lotteries And Gaming Authority of the Republic of Nigeria.</div>
    <div class="p g1 f c"><svg width="378" height="60" viewBox="0 0 378 60"><g class="bg" font-size="37"><text x="1" y="51" font-weight="700" textLength="51" lengthAdjust="spacingAndGlyphs">Be</text><text x="53" y="51" textLength="140" lengthAdjust="spacingAndGlyphs">Gamble</text><text x="194" y="51" font-weight="700" textLength="119" lengthAdjust="spacingAndGlyphs">Aware</text><text x="314" y="51" font-size="29" textLength="49" lengthAdjust="spacingAndGlyphs">.org</text><text x="359" y="19" font-size="14">®</text></g></svg></div></div>
    <div class="row" style="height:104px"><div class="p mut" style="width:945px;padding:38px 15px;line-height:14px">Copyright © 2025 «1xBet».<br>1xBet uses cookies to ensure the best user experience. By remaining on the website, you consent to the use of your cookie files on 1xBet. <u style="color:#fff;font-weight:500">Find out more</u></div>
    <div class="p f c" style="width:467px;gap:20px;padding-right:2px">${ic('headset', 51, '#a6bbd0')}<div><div style="font-weight:500;margin-bottom:7px">CUSTOMER SUPPORT</div><div style="font-size:20px;line-height:20px;color:#a6bbd0">08000077777</div></div></div>
    <div style="width:468px;display:flex;flex-direction:column;gap:10px"><div class="row" style="height:62px"><div class="p f c" style="width:375px;gap:10px">${['tx','insta','fb','tg','wa'].map(x => `<div class="f c ci">${ic(x, 16)}</div>`).join('')}</div><div class="p f c g1" style="font-size:20px">18+</div></div><div class="f c" style="height:32px;border-radius:8px;background:#286aa8">MOBILE VERSION</div></div></div>`;
  }
});
customElements.define('bet-page', class extends El {
  css() { return `:host{display:block}.m{display:flex;padding:10px 5px 0 10px;align-items:flex-start}.c0{width:1380px;flex:none}
  .cards{display:flex;gap:10px;overflow:hidden;position:relative}.cards::after{content:"";position:absolute;right:0;top:0;width:50px;height:158px;background:linear-gradient(90deg,rgba(28,65,102,0),#1c4166)}
  .sb{width:414px;height:5px;border-radius:3px;background:#6a819a;margin:5px 0 10px}.acc{display:flex;gap:10px;align-items:flex-start;margin-top:10px;height:558px}`; }
  html() {
    const cards = ['Russia. Premier League|Spartak Moscow|d:e0485a,fff|Dynamo Makhachkala|v:9dbfe0,e6f0fa|17/07/2025 / 05:30|1.414|5.07|9|+1244|98,82,75,59','Russia. Premier League|Pari Nizhny Novgorod|v:1f5fae,5fb7e8|Krasnodar|s:1d4d3c,5c7f72|18/07/2025 / 00:30|6.15|4.56|1.579|+1229|87,78,95,54','Russia. Premier League|Zenit Saint Petersburg|w:4bb4e6,f3c766|Rostov|x:f0de28,2d3a50|18/07/2025 / 03:00|1.308|6.21|11.1|+1196|94,78,88,54','UEFA European Championship. Women|France (Women)|f:fr|Germany (Women)|f:de|17/07/2025 / 07:00|2.508|3.4|2.955|+1282|95,70,95,54'];
    const r1 = '08:30|CR Vasco da Gama|x:1c1c1c,f4f4f4|Gremio Porto Alegrense|c:2a5878,a8d0e8|1.191|244502 / Brazil. Campeonato Brasileiro. Serie A|Sending Off No;07:00|France (Women)|f:fr|Germany (Women)|f:de|1.433|161720 / UEFA European Championship. Women|Double Chance 1X;07:00|Fortaleza EC|v:2f6cc0,e04848|Bahia|c:4a90d0,e8b0b0|1.83|244456 / Brazil. Campeonato Brasileiro. Serie A|Both Teams To Score Yes;06:00|Jablonec|v:2f7a4a,e8f2ea|AC Sparta Prague|c:181818,e0e0e0|1.23|206621 / Czech Republic. Chance Liga|Total 2 2.5 Under';
    const r2 = '02:00|Marine|v:a8b8cc,6880a8|Morecambe|s:a83030,f0e0e0|1.72|194615 / Club Friendlies|Handicap 1 (0);02:00|Zaglebie Sosnowiec|v:1c3c24,d83838|Trinec|c:f0b0b8,d83848|1.76|222092 / Club Friendlies|Handicap 1 (-2);02:00|Shrewsbury Town|c:28385c,b0a060|Kidderminster Harriers|v:f0d8d8,d84850|1.85|214124 / Club Friendlies|Handicap 1 (-1)';
    return `<top-bar></top-bar><div class="m"><side-left></side-left><div class="c0"><div class="cards">${cards.map(c => `<promo-card data="${c}"></promo-card>`).join('')}</div><div class="sb"></div><sports-tabs></sports-tabs><match-list></match-list>
    <div class="acc"><acca-card heading="Accumulator Of The Day No.1" total="4.226" rows="${r1}"></acca-card><acca-card heading="Live Accumulator Of The Day No.1" total="6.160" rows="${r2}"></acca-card></div></div><side-right></side-right></div><page-foot></page-foot>`;
  }
});
</script>
</body>
</html>
